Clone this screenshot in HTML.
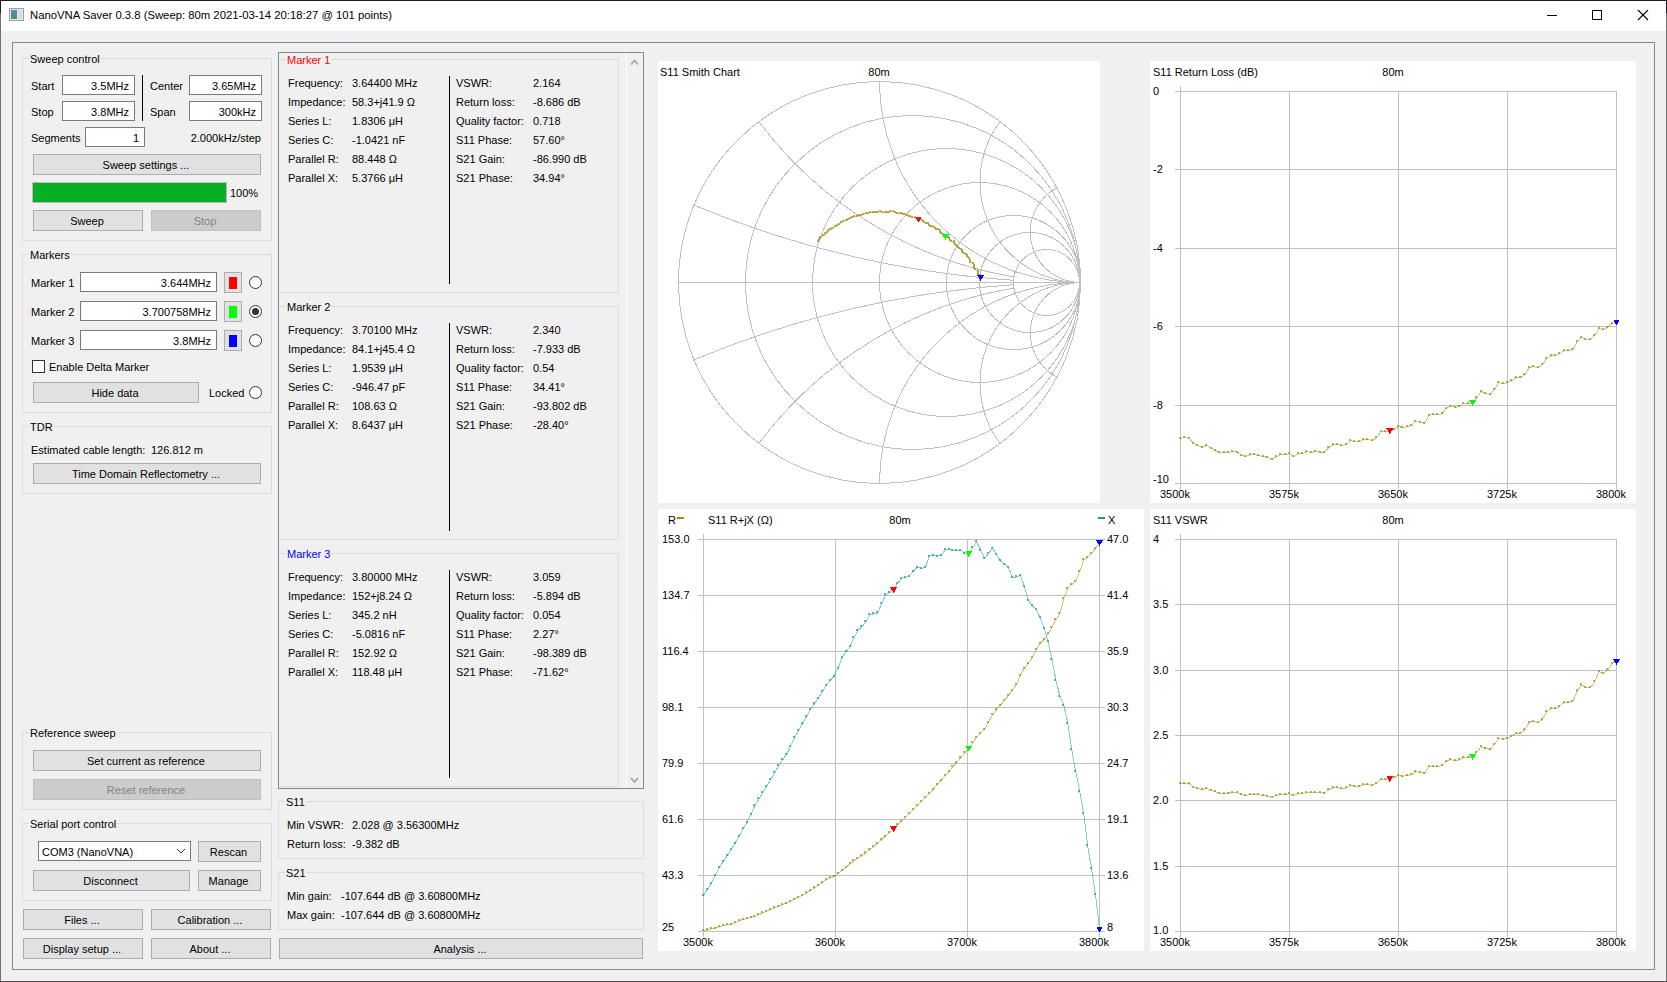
<!DOCTYPE html><html><head><meta charset="utf-8"><style>
*{margin:0;padding:0;box-sizing:border-box}
html,body{width:1667px;height:982px;overflow:hidden;background:#f0f0f0;font-family:"Liberation Sans",sans-serif;}
.t,.gl{position:absolute;font-size:11px;line-height:11px;white-space:nowrap;color:#000}
.gl{background:#f0f0f0;padding:0 1px}
.btn{position:absolute;background:#e1e1e1;border:1px solid #adadad}
.btn.dis{background:#cccccc;border-color:#bfbfbf}
.inp{position:absolute;background:#fff;border:1px solid #7a7a7a}
.grp{position:absolute;border:1px solid #dcdcdc}
.frm{position:absolute;border:1px solid #828790}
.rad{position:absolute;width:13px;height:13px;border-radius:50%;border:1px solid #333;background:#fff}
.dot{position:absolute;width:7px;height:7px;border-radius:50%;background:#333}
.blk{position:absolute}
svg{position:absolute;left:0;top:0}
</style></head><body>
<div class="blk" style="left:0px;top:0px;width:1667px;height:982px;background:#f0f0f0;"></div>
<div class="blk" style="left:0px;top:0px;width:1667px;height:31px;background:#fff;"></div>
<div class="blk" style="left:0px;top:0px;width:1667px;height:1px;background:#1c1c28;"></div>
<div class="blk" style="left:0px;top:0px;width:1px;height:982px;background:#707070;"></div>
<div class="blk" style="left:0px;top:0px;width:1px;height:13px;background:#1c1c28;"></div>
<div class="blk" style="left:1666px;top:0px;width:1px;height:982px;background:#707070;"></div>
<div class="blk" style="left:1666px;top:0px;width:1px;height:13px;background:#1c1c28;"></div>
<div class="blk" style="left:0px;top:981px;width:1667px;height:1px;background:#6b4a3a;"></div>
<div class="blk" style="left:9px;top:8px;width:15px;height:13px;background:#e8e8e8;border:1px solid #9aa0a6;"></div>
<div class="blk" style="left:11px;top:10px;width:6px;height:9px;background:linear-gradient(#5b8ab8,#3f9a5a);"></div>
<div class="blk" style="left:18px;top:10px;width:4px;height:9px;background:#d8dde0;"></div>
<div class="t" style="left:30px;top:11px;font-size:11.3px;line-height:11.3px;top:10px;">NanoVNA Saver 0.3.8 (Sweep: 80m 2021-03-14 20:18:27 @ 101 points)</div>
<div class="blk" style="left:1547px;top:15px;width:10px;height:1px;background:#000;"></div>
<div class="blk" style="left:1592px;top:10px;width:10px;height:10px;border:1px solid #000;"></div>
<svg width="1667" height="982" style="pointer-events:none"><path d="M1638 10 L1648 20 M1648 10 L1638 20" stroke="#000" stroke-width="1.1" fill="none"/></svg>
<div class="frm" style="left:12px;top:42px;width:1643px;height:928px;"></div>
<div class="grp" style="left:22px;top:58px;width:250px;height:183px;"></div>
<div class="gl" style="left:29px;top:54px;">Sweep control</div>
<div class="t" style="left:31px;top:81px;">Start</div>
<div class="inp" style="left:62px;top:75px;width:73px;height:20px;"></div>
<div class="t" style="right:1538px;top:81px;">3.5MHz</div>
<div class="t" style="left:31px;top:107px;">Stop</div>
<div class="inp" style="left:62px;top:101px;width:73px;height:20px;"></div>
<div class="t" style="right:1538px;top:107px;">3.8MHz</div>
<div class="blk" style="left:142px;top:75px;width:1px;height:46px;background:#000;"></div>
<div class="t" style="left:150px;top:81px;">Center</div>
<div class="inp" style="left:189px;top:75px;width:73px;height:20px;"></div>
<div class="t" style="right:1411px;top:81px;">3.65MHz</div>
<div class="t" style="left:150px;top:107px;">Span</div>
<div class="inp" style="left:189px;top:101px;width:73px;height:20px;"></div>
<div class="t" style="right:1411px;top:107px;">300kHz</div>
<div class="t" style="left:31px;top:133px;">Segments</div>
<div class="inp" style="left:85px;top:127px;width:60px;height:20px;"></div>
<div class="t" style="right:1528px;top:133px;">1</div>
<div class="t" style="right:1406px;top:133px;">2.000kHz/step</div>
<div class="btn" style="left:33px;top:154px;width:228px;height:21px;"></div>
<div class="t" style="left:32px;width:228px;top:160px;text-align:center;">Sweep settings ...</div>
<div class="blk" style="left:32px;top:182px;width:195px;height:21px;background:#06b025;border:1px solid #bcbcbc;"></div>
<div class="t" style="left:230px;top:188px;">100%</div>
<div class="btn" style="left:33px;top:210px;width:110px;height:21px;"></div>
<div class="t" style="left:32px;width:110px;top:216px;text-align:center;">Sweep</div>
<div class="btn dis" style="left:151px;top:210px;width:110px;height:21px;"></div>
<div class="t" style="left:150px;width:110px;top:216px;text-align:center;color:#838383;">Stop</div>
<div class="grp" style="left:22px;top:254px;width:250px;height:159px;"></div>
<div class="gl" style="left:29px;top:250px;">Markers</div>
<div class="t" style="left:31px;top:278px;">Marker 1</div>
<div class="inp" style="left:80px;top:272px;width:137px;height:20px;"></div>
<div class="t" style="right:1456px;top:278px;">3.644MHz</div>
<div class="btn" style="left:224px;top:272px;width:18px;height:21px;"></div>
<div class="blk" style="left:229px;top:277px;width:8px;height:12px;background:#ff0000;"></div>
<div class="rad" style="left:249px;top:276px;"></div>
<div class="t" style="left:31px;top:307px;">Marker 2</div>
<div class="inp" style="left:80px;top:301px;width:137px;height:20px;"></div>
<div class="t" style="right:1456px;top:307px;">3.700758MHz</div>
<div class="btn" style="left:224px;top:301px;width:18px;height:21px;"></div>
<div class="blk" style="left:229px;top:306px;width:8px;height:12px;background:#00ff00;"></div>
<div class="rad" style="left:249px;top:305px;"></div>
<div class="dot" style="left:252px;top:308px;"></div>
<div class="t" style="left:31px;top:336px;">Marker 3</div>
<div class="inp" style="left:80px;top:330px;width:137px;height:20px;"></div>
<div class="t" style="right:1456px;top:336px;">3.8MHz</div>
<div class="btn" style="left:224px;top:330px;width:18px;height:21px;"></div>
<div class="blk" style="left:229px;top:335px;width:8px;height:12px;background:#0000ff;"></div>
<div class="rad" style="left:249px;top:334px;"></div>
<div class="blk" style="left:32px;top:360px;width:13px;height:13px;background:#fff;border:1px solid #333;"></div>
<div class="t" style="left:49px;top:362px;">Enable Delta Marker</div>
<div class="btn" style="left:33px;top:382px;width:166px;height:21px;"></div>
<div class="t" style="left:32px;width:166px;top:388px;text-align:center;">Hide data</div>
<div class="t" style="left:209px;top:388px;">Locked</div>
<div class="rad" style="left:249px;top:386px;"></div>
<div class="grp" style="left:22px;top:426px;width:250px;height:68px;"></div>
<div class="gl" style="left:29px;top:422px;">TDR</div>
<div class="t" style="left:31px;top:445px;">Estimated cable length:</div>
<div class="t" style="left:151px;top:445px;">126.812 m</div>
<div class="btn" style="left:33px;top:463px;width:228px;height:21px;"></div>
<div class="t" style="left:32px;width:228px;top:469px;text-align:center;">Time Domain Reflectometry ...</div>
<div class="grp" style="left:22px;top:732px;width:250px;height:78px;"></div>
<div class="gl" style="left:29px;top:728px;">Reference sweep</div>
<div class="btn" style="left:33px;top:750px;width:228px;height:21px;"></div>
<div class="t" style="left:32px;width:228px;top:756px;text-align:center;">Set current as reference</div>
<div class="btn dis" style="left:33px;top:779px;width:228px;height:21px;"></div>
<div class="t" style="left:32px;width:228px;top:785px;text-align:center;color:#838383;">Reset reference</div>
<div class="grp" style="left:22px;top:823px;width:250px;height:78px;"></div>
<div class="gl" style="left:29px;top:819px;">Serial port control</div>
<div class="inp" style="left:38px;top:841px;width:153px;height:20px;"></div>
<div class="t" style="left:42px;top:847px;">COM3 (NanoVNA)</div>
<svg width="1667" height="982"><path d="M177 849 L181 853 L185 849" stroke="#333" stroke-width="1" fill="none"/></svg>
<div class="btn" style="left:198px;top:841px;width:63px;height:21px;"></div>
<div class="t" style="left:197px;width:63px;top:847px;text-align:center;">Rescan</div>
<div class="btn" style="left:33px;top:870px;width:157px;height:21px;"></div>
<div class="t" style="left:32px;width:157px;top:876px;text-align:center;">Disconnect</div>
<div class="btn" style="left:198px;top:870px;width:63px;height:21px;"></div>
<div class="t" style="left:197px;width:63px;top:876px;text-align:center;">Manage</div>
<div class="btn" style="left:23px;top:909px;width:120px;height:21px;"></div>
<div class="t" style="left:22px;width:120px;top:915px;text-align:center;">Files ...</div>
<div class="btn" style="left:151px;top:909px;width:120px;height:21px;"></div>
<div class="t" style="left:150px;width:120px;top:915px;text-align:center;">Calibration ...</div>
<div class="btn" style="left:23px;top:938px;width:120px;height:21px;"></div>
<div class="t" style="left:22px;width:120px;top:944px;text-align:center;">Display setup ...</div>
<div class="btn" style="left:151px;top:938px;width:120px;height:21px;"></div>
<div class="t" style="left:150px;width:120px;top:944px;text-align:center;">About ...</div>
<div class="frm" style="left:278px;top:52px;width:366px;height:737px;"></div>
<div class="blk" style="left:626px;top:53px;width:1px;height:735px;background:#fff;"></div>
<svg width="1667" height="982"><path d="M631 64.5 L634.5 60.5 L638 64.5" stroke="#a3a3a3" stroke-width="1.6" fill="none"/><path d="M631 778 L634.5 782 L638 778" stroke="#a3a3a3" stroke-width="1.8" fill="none"/></svg>
<div class="grp" style="left:279px;top:59px;width:340px;height:234px;"></div>
<div class="gl" style="left:286px;top:55px;color:#ff0000;">Marker 1</div>
<div class="blk" style="left:279px;top:59px;width:1px;height:234px;background:#f0f0f0;"></div>
<div class="t" style="left:288px;top:78px;">Frequency:</div>
<div class="t" style="left:352px;top:78px;">3.64400 MHz</div>
<div class="t" style="left:456px;top:78px;">VSWR:</div>
<div class="t" style="left:533px;top:78px;">2.164</div>
<div class="t" style="left:288px;top:97px;">Impedance:</div>
<div class="t" style="left:352px;top:97px;">58.3+j41.9 Ω</div>
<div class="t" style="left:456px;top:97px;">Return loss:</div>
<div class="t" style="left:533px;top:97px;">-8.686 dB</div>
<div class="t" style="left:288px;top:116px;">Series L:</div>
<div class="t" style="left:352px;top:116px;">1.8306 μH</div>
<div class="t" style="left:456px;top:116px;">Quality factor:</div>
<div class="t" style="left:533px;top:116px;">0.718</div>
<div class="t" style="left:288px;top:135px;">Series C:</div>
<div class="t" style="left:352px;top:135px;">-1.0421 nF</div>
<div class="t" style="left:456px;top:135px;">S11 Phase:</div>
<div class="t" style="left:533px;top:135px;">57.60°</div>
<div class="t" style="left:288px;top:154px;">Parallel R:</div>
<div class="t" style="left:352px;top:154px;">88.448 Ω</div>
<div class="t" style="left:456px;top:154px;">S21 Gain:</div>
<div class="t" style="left:533px;top:154px;">-86.990 dB</div>
<div class="t" style="left:288px;top:173px;">Parallel X:</div>
<div class="t" style="left:352px;top:173px;">5.3766 μH</div>
<div class="t" style="left:456px;top:173px;">S21 Phase:</div>
<div class="t" style="left:533px;top:173px;">34.94°</div>
<div class="blk" style="left:449px;top:76px;width:1px;height:208px;background:#000;"></div>
<div class="grp" style="left:279px;top:306px;width:340px;height:234px;"></div>
<div class="gl" style="left:286px;top:302px;">Marker 2</div>
<div class="blk" style="left:279px;top:306px;width:1px;height:234px;background:#f0f0f0;"></div>
<div class="t" style="left:288px;top:325px;">Frequency:</div>
<div class="t" style="left:352px;top:325px;">3.70100 MHz</div>
<div class="t" style="left:456px;top:325px;">VSWR:</div>
<div class="t" style="left:533px;top:325px;">2.340</div>
<div class="t" style="left:288px;top:344px;">Impedance:</div>
<div class="t" style="left:352px;top:344px;">84.1+j45.4 Ω</div>
<div class="t" style="left:456px;top:344px;">Return loss:</div>
<div class="t" style="left:533px;top:344px;">-7.933 dB</div>
<div class="t" style="left:288px;top:363px;">Series L:</div>
<div class="t" style="left:352px;top:363px;">1.9539 μH</div>
<div class="t" style="left:456px;top:363px;">Quality factor:</div>
<div class="t" style="left:533px;top:363px;">0.54</div>
<div class="t" style="left:288px;top:382px;">Series C:</div>
<div class="t" style="left:352px;top:382px;">-946.47 pF</div>
<div class="t" style="left:456px;top:382px;">S11 Phase:</div>
<div class="t" style="left:533px;top:382px;">34.41°</div>
<div class="t" style="left:288px;top:401px;">Parallel R:</div>
<div class="t" style="left:352px;top:401px;">108.63 Ω</div>
<div class="t" style="left:456px;top:401px;">S21 Gain:</div>
<div class="t" style="left:533px;top:401px;">-93.802 dB</div>
<div class="t" style="left:288px;top:420px;">Parallel X:</div>
<div class="t" style="left:352px;top:420px;">8.6437 μH</div>
<div class="t" style="left:456px;top:420px;">S21 Phase:</div>
<div class="t" style="left:533px;top:420px;">-28.40°</div>
<div class="blk" style="left:449px;top:323px;width:1px;height:208px;background:#000;"></div>
<div class="grp" style="left:279px;top:553px;width:340px;height:234px;"></div>
<div class="gl" style="left:286px;top:549px;color:#0000ff;">Marker 3</div>
<div class="blk" style="left:279px;top:553px;width:1px;height:234px;background:#f0f0f0;"></div>
<div class="t" style="left:288px;top:572px;">Frequency:</div>
<div class="t" style="left:352px;top:572px;">3.80000 MHz</div>
<div class="t" style="left:456px;top:572px;">VSWR:</div>
<div class="t" style="left:533px;top:572px;">3.059</div>
<div class="t" style="left:288px;top:591px;">Impedance:</div>
<div class="t" style="left:352px;top:591px;">152+j8.24 Ω</div>
<div class="t" style="left:456px;top:591px;">Return loss:</div>
<div class="t" style="left:533px;top:591px;">-5.894 dB</div>
<div class="t" style="left:288px;top:610px;">Series L:</div>
<div class="t" style="left:352px;top:610px;">345.2 nH</div>
<div class="t" style="left:456px;top:610px;">Quality factor:</div>
<div class="t" style="left:533px;top:610px;">0.054</div>
<div class="t" style="left:288px;top:629px;">Series C:</div>
<div class="t" style="left:352px;top:629px;">-5.0816 nF</div>
<div class="t" style="left:456px;top:629px;">S11 Phase:</div>
<div class="t" style="left:533px;top:629px;">2.27°</div>
<div class="t" style="left:288px;top:648px;">Parallel R:</div>
<div class="t" style="left:352px;top:648px;">152.92 Ω</div>
<div class="t" style="left:456px;top:648px;">S21 Gain:</div>
<div class="t" style="left:533px;top:648px;">-98.389 dB</div>
<div class="t" style="left:288px;top:667px;">Parallel X:</div>
<div class="t" style="left:352px;top:667px;">118.48 μH</div>
<div class="t" style="left:456px;top:667px;">S21 Phase:</div>
<div class="t" style="left:533px;top:667px;">-71.62°</div>
<div class="blk" style="left:449px;top:570px;width:1px;height:208px;background:#000;"></div>
<div class="grp" style="left:278px;top:801px;width:366px;height:58px;"></div>
<div class="gl" style="left:285px;top:797px;">S11</div>
<div class="t" style="left:287px;top:820px;">Min VSWR:</div>
<div class="t" style="left:352px;top:820px;">2.028 @ 3.56300MHz</div>
<div class="t" style="left:287px;top:839px;">Return loss:</div>
<div class="t" style="left:352px;top:839px;">-9.382 dB</div>
<div class="grp" style="left:278px;top:872px;width:366px;height:58px;"></div>
<div class="gl" style="left:285px;top:868px;">S21</div>
<div class="t" style="left:287px;top:891px;">Min gain:</div>
<div class="t" style="left:341px;top:891px;">-107.644 dB @ 3.60800MHz</div>
<div class="t" style="left:287px;top:910px;">Max gain:</div>
<div class="t" style="left:341px;top:910px;">-107.644 dB @ 3.60800MHz</div>
<div class="btn" style="left:279px;top:938px;width:364px;height:21px;"></div>
<div class="t" style="left:278px;width:364px;top:944px;text-align:center;">Analysis ...</div>
<div class="blk" style="left:658px;top:61px;width:442px;height:442px;background:#fff;"></div>
<div class="blk" style="left:1150px;top:61px;width:486px;height:442px;background:#fff;"></div>
<div class="blk" style="left:658px;top:509px;width:486px;height:442px;background:#fff;"></div>
<div class="blk" style="left:1150px;top:509px;width:486px;height:442px;background:#fff;"></div>
<svg width="1667" height="982" shape-rendering="crispEdges"><g stroke="#c0c0c0" stroke-width="1" fill="none" shape-rendering="crispEdges"><circle cx="879.5" cy="282.5" r="201"/><line x1="678.5" y1="282.5" x2="1080.5" y2="282.5"/><circle cx="979.5" cy="282.5" r="100"/><circle cx="1013.5" cy="282.5" r="67"/><circle cx="1029.5" cy="282.5" r="50"/><circle cx="1046.5" cy="282.5" r="33"/><circle cx="946.5" cy="282.5" r="134"/><circle cx="912.5" cy="282.5" r="167"/><path d="M1080.50 282.50 A50.25 50.25 0 0 0 1056.91 377.12" fill="none"/><path d="M1080.50 282.50 A50.25 50.25 0 0 1 1056.91 187.88" fill="none"/><path d="M1080.50 282.50 A100.5 100.5 0 0 0 1000.24 443.48" fill="none"/><path d="M1080.50 282.50 A100.5 100.5 0 0 1 1000.24 121.52" fill="none"/><path d="M1080.50 282.50 A201 201 0 0 0 879.50 483.50" fill="none"/><path d="M1080.50 282.50 A201 201 0 0 1 879.50 81.50" fill="none"/><path d="M1014.15 288.01 A402 402 0 0 0 759.45 442.57" fill="none"/><path d="M1014.15 276.99 A402 402 0 0 1 759.45 122.43" fill="none"/><path d="M1013.02 284.77 A1005 1005 0 0 0 692.66 360.35" fill="none"/><path d="M1013.02 280.23 A1005 1005 0 0 1 692.66 204.65" fill="none"/></g><g shape-rendering="auto"><polyline points="818.2,241.1 819.3,239.1 820.9,237.4 823.5,235.8 825.7,233.9 827.6,232.5 828.8,230.7 830.7,229.6 832.9,228.3 835.3,227.0 837.5,225.3 839.3,224.0 841.4,222.4 843.7,221.1 846.2,220.5 848.5,219.6 850.5,218.2 852.7,217.3 855.0,216.6 857.2,216.0 859.3,215.7 861.3,215.5 863.6,214.3 866.1,213.5 868.4,213.1 870.7,212.5 873.3,212.9 875.7,212.2 878.0,212.1 880.4,211.7 882.8,212.0 885.2,212.0 886.7,212.3 888.2,212.6 890.8,211.9 893.7,211.9 896.0,212.4 898.0,213.2 900.2,213.6 902.4,213.5 903.8,214.3 905.5,214.9 907.6,215.3 909.2,216.0 910.6,217.0 912.8,217.4 915.3,217.3 916.9,218.2 918.5,219.0 920.3,219.9 922.2,220.3 923.4,221.6 925.0,222.5 926.5,223.4 928.4,223.8 929.5,225.0 930.5,226.4 932.9,226.1 934.3,227.2 935.5,228.4 936.7,229.5 938.7,229.9 940.0,230.8 940.9,232.2 942.0,233.3 943.5,234.1 944.3,235.4 945.4,236.5 947.2,237.1 949.2,237.5 949.5,238.9 950.0,240.3 951.9,241.1 954.2,241.8 954.6,243.2 955.4,244.3 956.4,245.2 957.7,246.0 958.3,247.5 959.4,248.2 961.8,249.2 962.7,250.7 962.9,252.4 964.0,253.2 966.1,254.1 967.2,255.2 967.5,256.2 968.4,257.5 969.7,259.0 970.1,260.9 970.7,262.3 973.2,263.8 974.8,265.4 974.4,267.1 974.6,268.3 976.0,269.8 978.2,271.3 978.0,273.0 978.8,274.3 980.1,275.6 980.6,277.4" fill="none" stroke="rgba(160,140,20,0.5)" stroke-width="1" shape-rendering="crispEdges"/><path d="M817 240h2v2h-2zM818 238h2v2h-2zM819 236h2v2h-2zM822 234h2v2h-2zM824 232h2v2h-2zM826 231h2v2h-2zM827 229h2v2h-2zM829 228h2v2h-2zM831 227h2v2h-2zM834 225h2v2h-2zM836 224h2v2h-2zM838 223h2v2h-2zM840 221h2v2h-2zM842 220h2v2h-2zM845 219h2v2h-2zM847 218h2v2h-2zM849 217h2v2h-2zM851 216h2v2h-2zM853 215h2v2h-2zM856 215h2v2h-2zM858 214h2v2h-2zM860 214h2v2h-2zM862 213h2v2h-2zM865 212h2v2h-2zM867 212h2v2h-2zM869 211h2v2h-2zM872 211h2v2h-2zM874 211h2v2h-2zM876 211h2v2h-2zM879 210h2v2h-2zM881 211h2v2h-2zM884 211h2v2h-2zM885 211h2v2h-2zM887 211h2v2h-2zM889 210h2v2h-2zM892 210h2v2h-2zM894 211h2v2h-2zM896 212h2v2h-2zM899 212h2v2h-2zM901 212h2v2h-2zM902 213h2v2h-2zM904 213h2v2h-2zM906 214h2v2h-2zM908 215h2v2h-2zM909 215h2v2h-2zM911 216h2v2h-2zM914 216h2v2h-2zM915 217h2v2h-2zM917 218h2v2h-2zM919 218h2v2h-2zM921 219h2v2h-2zM922 220h2v2h-2zM923 221h2v2h-2zM925 222h2v2h-2zM927 222h2v2h-2zM928 224h2v2h-2zM929 225h2v2h-2zM931 225h2v2h-2zM933 226h2v2h-2zM934 227h2v2h-2zM935 228h2v2h-2zM937 228h2v2h-2zM939 229h2v2h-2zM939 231h2v2h-2zM940 232h2v2h-2zM942 233h2v2h-2zM943 234h2v2h-2zM944 235h2v2h-2zM946 236h2v2h-2zM948 236h2v2h-2zM948 237h2v2h-2zM949 239h2v2h-2zM950 240h2v2h-2zM953 240h2v2h-2zM953 242h2v2h-2zM954 243h2v2h-2zM955 244h2v2h-2zM956 245h2v2h-2zM957 246h2v2h-2zM958 247h2v2h-2zM960 248h2v2h-2zM961 249h2v2h-2zM961 251h2v2h-2zM963 252h2v2h-2zM965 253h2v2h-2zM966 254h2v2h-2zM966 255h2v2h-2zM967 256h2v2h-2zM968 257h2v2h-2zM969 259h2v2h-2zM969 261h2v2h-2zM972 262h2v2h-2zM973 264h2v2h-2zM973 266h2v2h-2zM973 267h2v2h-2zM974 268h2v2h-2zM977 270h2v2h-2zM977 272h2v2h-2zM977 273h2v2h-2zM979 274h2v2h-2zM979 276h2v2h-2z" fill="rgba(160,140,20,0.7)" shape-rendering="crispEdges"/><path d="M915.0 216.5 L922.0 216.5 L918.5 222.5 Z" fill="#ff0000" shape-rendering="crispEdges"/><path d="M941.9 234.0 L948.9 234.0 L945.4 240.0 Z" fill="#00ff00" shape-rendering="crispEdges"/><path d="M977.1 274.9 L984.1 274.9 L980.6 280.9 Z" fill="#0000ff" shape-rendering="crispEdges"/></g><g stroke="#c0c0c0" stroke-width="1"><line x1="1175" y1="91.5" x2="1617" y2="91.5"/><line x1="1175" y1="169.9" x2="1617" y2="169.9"/><line x1="1175" y1="248.3" x2="1617" y2="248.3"/><line x1="1175" y1="326.7" x2="1617" y2="326.7"/><line x1="1175" y1="405.1" x2="1617" y2="405.1"/><line x1="1175" y1="483.5" x2="1617" y2="483.5"/><line x1="1180.5" y1="86" x2="1180.5" y2="489"/><line x1="1289.5" y1="91" x2="1289.5" y2="489"/><line x1="1398.5" y1="91" x2="1398.5" y2="489"/><line x1="1507.5" y1="91" x2="1507.5" y2="489"/><line x1="1616.5" y1="91" x2="1616.5" y2="489"/></g><g shape-rendering="auto"><polyline points="1180.5,438.3 1184.9,437.2 1189.2,438.3 1193.6,443.4 1197.9,445.4 1202.3,447.5 1206.7,445.4 1211.0,448.0 1215.4,450.4 1219.7,452.7 1224.1,452.7 1228.5,452.7 1232.8,451.5 1237.2,452.1 1241.5,455.4 1245.9,456.6 1250.3,454.8 1254.6,454.8 1259.0,455.6 1263.3,456.4 1267.7,457.6 1272.1,459.5 1276.4,456.5 1280.8,454.8 1285.1,454.8 1289.5,453.5 1293.9,456.5 1298.2,453.8 1302.6,453.8 1306.9,451.5 1311.3,452.5 1315.7,451.5 1320.0,452.1 1324.4,452.7 1328.7,447.5 1333.1,444.5 1337.5,444.5 1341.8,445.7 1346.2,444.5 1350.5,440.6 1354.9,441.8 1359.3,441.8 1363.6,439.6 1368.0,439.6 1372.3,440.6 1376.7,437.6 1381.1,431.8 1385.4,431.8 1389.8,430.9 1394.1,429.5 1398.5,426.4 1402.9,427.7 1407.2,426.6 1411.6,425.5 1415.9,421.4 1420.3,422.3 1424.7,423.6 1429.0,415.1 1433.4,414.4 1437.7,414.4 1442.1,413.8 1446.5,408.4 1450.8,406.3 1455.2,407.4 1459.5,406.6 1463.9,403.4 1468.3,403.6 1472.6,402.4 1477.0,397.6 1481.3,391.5 1485.7,393.5 1490.1,394.5 1494.4,389.5 1498.8,382.7 1503.1,383.7 1507.5,382.7 1511.9,380.7 1516.2,377.6 1520.6,377.6 1524.9,374.6 1529.3,367.5 1533.7,366.5 1538.0,367.9 1542.4,364.8 1546.7,358.4 1551.1,355.7 1555.5,355.7 1559.8,353.7 1564.2,350.6 1568.5,350.6 1572.9,349.6 1577.3,341.8 1581.6,337.5 1586.0,339.5 1590.3,339.5 1594.7,335.5 1599.1,328.5 1603.4,329.7 1607.8,327.4 1612.1,323.3 1616.5,322.0" fill="none" stroke="rgba(160,140,20,0.5)" stroke-width="1" shape-rendering="crispEdges"/><path d="M1179 437h2v2h-2zM1183 436h2v2h-2zM1188 437h2v2h-2zM1192 442h2v2h-2zM1196 444h2v2h-2zM1201 446h2v2h-2zM1205 444h2v2h-2zM1210 447h2v2h-2zM1214 449h2v2h-2zM1218 451h2v2h-2zM1223 451h2v2h-2zM1227 451h2v2h-2zM1231 450h2v2h-2zM1236 451h2v2h-2zM1240 454h2v2h-2zM1244 455h2v2h-2zM1249 453h2v2h-2zM1253 453h2v2h-2zM1257 454h2v2h-2zM1262 455h2v2h-2zM1266 456h2v2h-2zM1271 458h2v2h-2zM1275 455h2v2h-2zM1279 453h2v2h-2zM1284 453h2v2h-2zM1288 452h2v2h-2zM1292 455h2v2h-2zM1297 452h2v2h-2zM1301 452h2v2h-2zM1305 450h2v2h-2zM1310 451h2v2h-2zM1314 450h2v2h-2zM1319 451h2v2h-2zM1323 451h2v2h-2zM1327 446h2v2h-2zM1332 443h2v2h-2zM1336 443h2v2h-2zM1340 444h2v2h-2zM1345 443h2v2h-2zM1349 439h2v2h-2zM1353 440h2v2h-2zM1358 440h2v2h-2zM1362 438h2v2h-2zM1366 438h2v2h-2zM1371 439h2v2h-2zM1375 436h2v2h-2zM1380 430h2v2h-2zM1384 430h2v2h-2zM1388 429h2v2h-2zM1393 428h2v2h-2zM1397 425h2v2h-2zM1401 426h2v2h-2zM1406 425h2v2h-2zM1410 424h2v2h-2zM1414 420h2v2h-2zM1419 421h2v2h-2zM1423 422h2v2h-2zM1428 414h2v2h-2zM1432 413h2v2h-2zM1436 413h2v2h-2zM1441 412h2v2h-2zM1445 407h2v2h-2zM1449 405h2v2h-2zM1454 406h2v2h-2zM1458 405h2v2h-2zM1462 402h2v2h-2zM1467 402h2v2h-2zM1471 401h2v2h-2zM1475 396h2v2h-2zM1480 390h2v2h-2zM1484 392h2v2h-2zM1489 393h2v2h-2zM1493 388h2v2h-2zM1497 381h2v2h-2zM1502 382h2v2h-2zM1506 381h2v2h-2zM1510 379h2v2h-2zM1515 376h2v2h-2zM1519 376h2v2h-2zM1523 373h2v2h-2zM1528 366h2v2h-2zM1532 365h2v2h-2zM1537 366h2v2h-2zM1541 363h2v2h-2zM1545 357h2v2h-2zM1550 354h2v2h-2zM1554 354h2v2h-2zM1558 352h2v2h-2zM1563 349h2v2h-2zM1567 349h2v2h-2zM1571 348h2v2h-2zM1576 340h2v2h-2zM1580 336h2v2h-2zM1584 338h2v2h-2zM1589 338h2v2h-2zM1593 334h2v2h-2zM1598 327h2v2h-2zM1602 328h2v2h-2zM1606 326h2v2h-2zM1611 322h2v2h-2zM1615 320h2v2h-2z" fill="rgba(160,140,20,0.7)" shape-rendering="crispEdges"/><path d="M1386.3 428.4 L1393.3 428.4 L1389.8 434.4 Z" fill="#ff0000" shape-rendering="crispEdges"/><path d="M1469.1 399.9 L1476.1 399.9 L1472.6 405.9 Z" fill="#00ff00" shape-rendering="crispEdges"/><path d="M1613.0 319.5 L1620.0 319.5 L1616.5 325.5 Z" fill="#0000ff" shape-rendering="crispEdges"/></g><g stroke="#c0c0c0" stroke-width="1"><line x1="1175" y1="539.5" x2="1617" y2="539.5"/><line x1="1175" y1="604.8" x2="1617" y2="604.8"/><line x1="1175" y1="670.2" x2="1617" y2="670.2"/><line x1="1175" y1="735.5" x2="1617" y2="735.5"/><line x1="1175" y1="800.8" x2="1617" y2="800.8"/><line x1="1175" y1="866.2" x2="1617" y2="866.2"/><line x1="1175" y1="931.5" x2="1617" y2="931.5"/><line x1="1180.5" y1="534" x2="1180.5" y2="937"/><line x1="1289.5" y1="539" x2="1289.5" y2="937"/><line x1="1398.5" y1="539" x2="1398.5" y2="937"/><line x1="1507.5" y1="539" x2="1507.5" y2="937"/><line x1="1616.5" y1="539" x2="1616.5" y2="937"/></g><g shape-rendering="auto"><polyline points="1180.5,783.8 1184.9,783.0 1189.2,783.8 1193.6,787.2 1197.9,788.5 1202.3,789.8 1206.7,788.5 1211.0,790.2 1215.4,791.7 1219.7,793.2 1224.1,793.2 1228.5,793.2 1232.8,792.4 1237.2,792.7 1241.5,794.8 1245.9,795.6 1250.3,794.4 1254.6,794.4 1259.0,794.9 1263.3,795.4 1267.7,796.1 1272.1,797.3 1276.4,795.5 1280.8,794.4 1285.1,794.4 1289.5,793.7 1293.9,795.5 1298.2,793.8 1302.6,793.8 1306.9,792.4 1311.3,793.0 1315.7,792.4 1320.0,792.7 1324.4,793.2 1328.7,789.8 1333.1,787.9 1337.5,787.9 1341.8,788.7 1346.2,787.9 1350.5,785.3 1354.9,786.1 1359.3,786.1 1363.6,784.7 1368.0,784.7 1372.3,785.3 1376.7,783.3 1381.1,779.3 1385.4,779.3 1389.8,778.6 1394.1,777.7 1398.5,775.4 1402.9,776.3 1407.2,775.5 1411.6,774.7 1415.9,771.7 1420.3,772.3 1424.7,773.3 1429.0,766.8 1433.4,766.3 1437.7,766.3 1442.1,765.7 1446.5,761.4 1450.8,759.7 1455.2,760.6 1459.5,759.9 1463.9,757.2 1468.3,757.4 1472.6,756.4 1477.0,752.1 1481.3,746.6 1485.7,748.5 1490.1,749.3 1494.4,744.7 1498.8,738.2 1503.1,739.1 1507.5,738.2 1511.9,736.2 1516.2,733.0 1520.6,733.0 1524.9,730.0 1529.3,722.3 1533.7,721.2 1538.0,722.7 1542.4,719.2 1546.7,711.9 1551.1,708.7 1555.5,708.7 1559.8,706.2 1564.2,702.3 1568.5,702.3 1572.9,701.1 1577.3,690.8 1581.6,684.8 1586.0,687.7 1590.3,687.7 1594.7,682.0 1599.1,671.6 1603.4,673.4 1607.8,670.0 1612.1,663.6 1616.5,661.5" fill="none" stroke="rgba(160,140,20,0.5)" stroke-width="1" shape-rendering="crispEdges"/><path d="M1179 782h2v2h-2zM1183 782h2v2h-2zM1188 782h2v2h-2zM1192 786h2v2h-2zM1196 787h2v2h-2zM1201 788h2v2h-2zM1205 787h2v2h-2zM1210 789h2v2h-2zM1214 790h2v2h-2zM1218 792h2v2h-2zM1223 792h2v2h-2zM1227 792h2v2h-2zM1231 791h2v2h-2zM1236 791h2v2h-2zM1240 793h2v2h-2zM1244 794h2v2h-2zM1249 793h2v2h-2zM1253 793h2v2h-2zM1257 793h2v2h-2zM1262 794h2v2h-2zM1266 795h2v2h-2zM1271 796h2v2h-2zM1275 794h2v2h-2zM1279 793h2v2h-2zM1284 793h2v2h-2zM1288 792h2v2h-2zM1292 794h2v2h-2zM1297 792h2v2h-2zM1301 792h2v2h-2zM1305 791h2v2h-2zM1310 791h2v2h-2zM1314 791h2v2h-2zM1319 791h2v2h-2zM1323 792h2v2h-2zM1327 788h2v2h-2zM1332 786h2v2h-2zM1336 786h2v2h-2zM1340 787h2v2h-2zM1345 786h2v2h-2zM1349 784h2v2h-2zM1353 785h2v2h-2zM1358 785h2v2h-2zM1362 783h2v2h-2zM1366 783h2v2h-2zM1371 784h2v2h-2zM1375 782h2v2h-2zM1380 778h2v2h-2zM1384 778h2v2h-2zM1388 777h2v2h-2zM1393 776h2v2h-2zM1397 774h2v2h-2zM1401 775h2v2h-2zM1406 774h2v2h-2zM1410 773h2v2h-2zM1414 770h2v2h-2zM1419 771h2v2h-2zM1423 772h2v2h-2zM1428 765h2v2h-2zM1432 765h2v2h-2zM1436 765h2v2h-2zM1441 764h2v2h-2zM1445 760h2v2h-2zM1449 758h2v2h-2zM1454 759h2v2h-2zM1458 758h2v2h-2zM1462 756h2v2h-2zM1467 756h2v2h-2zM1471 755h2v2h-2zM1475 751h2v2h-2zM1480 745h2v2h-2zM1484 747h2v2h-2zM1489 748h2v2h-2zM1493 743h2v2h-2zM1497 737h2v2h-2zM1502 738h2v2h-2zM1506 737h2v2h-2zM1510 735h2v2h-2zM1515 732h2v2h-2zM1519 732h2v2h-2zM1523 728h2v2h-2zM1528 721h2v2h-2zM1532 720h2v2h-2zM1537 721h2v2h-2zM1541 718h2v2h-2zM1545 710h2v2h-2zM1550 707h2v2h-2zM1554 707h2v2h-2zM1558 705h2v2h-2zM1563 701h2v2h-2zM1567 701h2v2h-2zM1571 700h2v2h-2zM1576 689h2v2h-2zM1580 683h2v2h-2zM1584 686h2v2h-2zM1589 686h2v2h-2zM1593 680h2v2h-2zM1598 670h2v2h-2zM1602 672h2v2h-2zM1606 668h2v2h-2zM1611 662h2v2h-2zM1615 660h2v2h-2z" fill="rgba(160,140,20,0.7)" shape-rendering="crispEdges"/><path d="M1386.3 776.1 L1393.3 776.1 L1389.8 782.1 Z" fill="#ff0000" shape-rendering="crispEdges"/><path d="M1469.1 753.9 L1476.1 753.9 L1472.6 759.9 Z" fill="#00ff00" shape-rendering="crispEdges"/><path d="M1613.0 659.0 L1620.0 659.0 L1616.5 665.0 Z" fill="#0000ff" shape-rendering="crispEdges"/></g><g stroke="#c0c0c0" stroke-width="1"><line x1="698" y1="539.5" x2="1105" y2="539.5"/><line x1="698" y1="595.5" x2="1105" y2="595.5"/><line x1="698" y1="651.5" x2="1105" y2="651.5"/><line x1="698" y1="707.5" x2="1105" y2="707.5"/><line x1="698" y1="763.5" x2="1105" y2="763.5"/><line x1="698" y1="819.5" x2="1105" y2="819.5"/><line x1="698" y1="875.5" x2="1105" y2="875.5"/><line x1="698" y1="931.5" x2="1105" y2="931.5"/><line x1="703.5" y1="534" x2="703.5" y2="937"/><line x1="835.5" y1="539" x2="835.5" y2="937"/><line x1="967.5" y1="539" x2="967.5" y2="937"/><line x1="1099.5" y1="539" x2="1099.5" y2="937"/></g><g shape-rendering="auto"><polyline points="703.5,930.9 707.5,930.0 711.4,929.0 715.4,928.0 719.3,926.9 723.3,925.7 727.3,924.9 731.2,924.2 735.2,922.6 739.1,921.0 743.1,919.4 747.1,918.4 751.0,917.4 755.0,916.4 758.9,914.7 762.9,912.9 766.9,911.1 770.8,909.6 774.8,908.0 778.7,906.4 782.7,904.7 786.7,903.0 790.6,901.3 794.6,899.4 798.5,897.4 802.5,895.4 806.5,893.0 810.4,890.5 814.4,888.0 818.3,885.2 822.3,882.4 826.3,879.7 830.2,878.0 834.2,876.3 838.1,873.4 842.1,870.2 846.1,867.0 850.0,863.9 854.0,861.0 857.9,858.3 861.9,855.7 865.9,853.0 869.8,849.7 873.8,846.4 877.7,843.1 881.7,839.7 885.7,836.0 889.6,832.4 893.6,828.7 897.5,825.0 901.5,821.3 905.5,817.5 909.4,813.6 913.4,809.6 917.3,805.7 921.3,801.7 925.3,797.7 929.2,793.8 933.2,789.3 937.1,784.9 941.1,780.4 945.1,776.0 949.0,771.4 953.0,766.9 956.9,762.3 960.9,757.6 964.9,753.0 968.8,748.1 972.8,742.6 976.7,737.2 980.7,733.2 984.7,729.2 988.6,722.1 992.6,714.9 996.5,709.9 1000.5,705.3 1004.5,700.5 1008.4,695.6 1012.4,690.2 1016.3,684.7 1020.3,675.2 1024.3,668.4 1028.2,663.1 1032.2,657.9 1036.1,649.9 1040.1,643.3 1044.1,639.3 1048.0,634.0 1052.0,627.3 1055.9,619.6 1059.9,613.5 1063.9,598.7 1067.8,588.1 1071.8,584.5 1075.7,581.5 1079.7,571.6 1083.7,559.8 1087.6,557.4 1091.6,553.6 1095.5,548.8 1099.5,542.5" fill="none" stroke="rgba(160,140,20,0.5)" stroke-width="1" shape-rendering="crispEdges"/><path d="M702 929h2v2h-2zM706 928h2v2h-2zM710 927h2v2h-2zM714 927h2v2h-2zM718 925h2v2h-2zM722 924h2v2h-2zM726 923h2v2h-2zM730 923h2v2h-2zM734 921h2v2h-2zM738 919h2v2h-2zM742 918h2v2h-2zM746 917h2v2h-2zM750 916h2v2h-2zM753 915h2v2h-2zM757 913h2v2h-2zM761 911h2v2h-2zM765 910h2v2h-2zM769 908h2v2h-2zM773 906h2v2h-2zM777 905h2v2h-2zM781 903h2v2h-2zM785 902h2v2h-2zM789 900h2v2h-2zM793 898h2v2h-2zM797 896h2v2h-2zM801 894h2v2h-2zM805 891h2v2h-2zM809 889h2v2h-2zM813 886h2v2h-2zM817 884h2v2h-2zM821 881h2v2h-2zM825 878h2v2h-2zM829 876h2v2h-2zM833 875h2v2h-2zM837 872h2v2h-2zM841 869h2v2h-2zM845 866h2v2h-2zM849 862h2v2h-2zM852 859h2v2h-2zM856 857h2v2h-2zM860 854h2v2h-2zM864 851h2v2h-2zM868 848h2v2h-2zM872 845h2v2h-2zM876 842h2v2h-2zM880 838h2v2h-2zM884 835h2v2h-2zM888 831h2v2h-2zM892 827h2v2h-2zM896 823h2v2h-2zM900 820h2v2h-2zM904 816h2v2h-2zM908 812h2v2h-2zM912 808h2v2h-2zM916 804h2v2h-2zM920 800h2v2h-2zM924 796h2v2h-2zM928 792h2v2h-2zM932 788h2v2h-2zM936 783h2v2h-2zM940 779h2v2h-2zM944 774h2v2h-2zM948 770h2v2h-2zM951 765h2v2h-2zM955 761h2v2h-2zM959 756h2v2h-2zM963 751h2v2h-2zM967 747h2v2h-2zM971 741h2v2h-2zM975 736h2v2h-2zM979 732h2v2h-2zM983 728h2v2h-2zM987 721h2v2h-2zM991 713h2v2h-2zM995 708h2v2h-2zM999 704h2v2h-2zM1003 699h2v2h-2zM1007 694h2v2h-2zM1011 689h2v2h-2zM1015 683h2v2h-2zM1019 674h2v2h-2zM1023 667h2v2h-2zM1027 662h2v2h-2zM1031 656h2v2h-2zM1035 648h2v2h-2zM1039 642h2v2h-2zM1043 638h2v2h-2zM1047 632h2v2h-2zM1050 626h2v2h-2zM1054 618h2v2h-2zM1058 612h2v2h-2zM1062 597h2v2h-2zM1066 587h2v2h-2zM1070 583h2v2h-2zM1074 580h2v2h-2zM1078 570h2v2h-2zM1082 558h2v2h-2zM1086 556h2v2h-2zM1090 552h2v2h-2zM1094 547h2v2h-2zM1098 541h2v2h-2z" fill="rgba(160,140,20,0.7)" shape-rendering="crispEdges"/><polyline points="703.5,895.2 707.5,889.4 711.4,883.5 715.4,875.6 719.3,867.6 723.3,861.6 727.3,855.6 731.2,849.4 735.2,843.1 739.1,836.1 743.1,828.9 747.1,822.3 751.0,814.1 755.0,805.5 758.9,799.0 762.9,792.5 766.9,786.0 770.8,779.6 774.8,772.5 778.7,765.5 782.7,759.9 786.7,754.3 790.6,746.1 794.6,737.9 798.5,730.8 802.5,723.7 806.5,716.7 810.4,709.6 814.4,703.9 818.3,698.2 822.3,691.8 826.3,685.2 830.2,680.3 834.2,676.2 838.1,668.0 842.1,657.0 846.1,651.5 850.0,646.9 854.0,637.9 857.9,630.3 861.9,626.9 865.9,621.7 869.8,614.7 873.8,613.8 877.7,613.0 881.7,603.6 885.7,594.9 889.6,592.6 893.6,589.7 897.5,583.5 901.5,578.3 905.5,577.6 909.4,576.0 913.4,571.2 917.3,567.3 921.3,568.2 925.3,567.6 929.2,556.2 933.2,555.4 937.1,556.1 941.1,555.4 945.1,549.9 949.0,549.0 953.0,551.0 956.9,550.8 960.9,550.5 964.9,553.1 968.8,553.5 972.8,547.6 976.7,541.7 980.7,550.0 984.7,558.6 988.6,553.4 992.6,548.1 996.5,554.5 1000.5,560.9 1004.5,564.3 1008.4,567.2 1012.4,577.7 1016.3,576.9 1020.3,575.4 1024.3,586.0 1028.2,600.2 1032.2,605.6 1036.1,609.3 1040.1,617.7 1044.1,628.1 1048.0,641.7 1052.0,659.5 1055.9,680.2 1059.9,696.0 1063.9,705.5 1067.8,723.1 1071.8,749.9 1075.7,771.4 1079.7,791.2 1083.7,813.8 1087.6,845.2 1091.6,868.8 1095.5,894.9 1099.5,929.0" fill="none" stroke="rgba(20,160,140,0.5)" stroke-width="1" shape-rendering="crispEdges"/><path d="M702 894h2v2h-2zM706 888h2v2h-2zM710 882h2v2h-2zM714 874h2v2h-2zM718 866h2v2h-2zM722 860h2v2h-2zM726 854h2v2h-2zM730 848h2v2h-2zM734 842h2v2h-2zM738 835h2v2h-2zM742 827h2v2h-2zM746 821h2v2h-2zM750 813h2v2h-2zM753 804h2v2h-2zM757 797h2v2h-2zM761 791h2v2h-2zM765 785h2v2h-2zM769 778h2v2h-2zM773 771h2v2h-2zM777 764h2v2h-2zM781 758h2v2h-2zM785 753h2v2h-2zM789 745h2v2h-2zM793 736h2v2h-2zM797 729h2v2h-2zM801 722h2v2h-2zM805 715h2v2h-2zM809 708h2v2h-2zM813 702h2v2h-2zM817 697h2v2h-2zM821 690h2v2h-2zM825 684h2v2h-2zM829 679h2v2h-2zM833 675h2v2h-2zM837 667h2v2h-2zM841 656h2v2h-2zM845 650h2v2h-2zM849 645h2v2h-2zM852 636h2v2h-2zM856 629h2v2h-2zM860 625h2v2h-2zM864 620h2v2h-2zM868 613h2v2h-2zM872 612h2v2h-2zM876 611h2v2h-2zM880 602h2v2h-2zM884 593h2v2h-2zM888 591h2v2h-2zM892 588h2v2h-2zM896 582h2v2h-2zM900 577h2v2h-2zM904 576h2v2h-2zM908 575h2v2h-2zM912 570h2v2h-2zM916 566h2v2h-2zM920 567h2v2h-2zM924 566h2v2h-2zM928 555h2v2h-2zM932 554h2v2h-2zM936 555h2v2h-2zM940 554h2v2h-2zM944 548h2v2h-2zM948 548h2v2h-2zM951 549h2v2h-2zM955 549h2v2h-2zM959 549h2v2h-2zM963 552h2v2h-2zM967 552h2v2h-2zM971 546h2v2h-2zM975 540h2v2h-2zM979 549h2v2h-2zM983 557h2v2h-2zM987 552h2v2h-2zM991 547h2v2h-2zM995 553h2v2h-2zM999 559h2v2h-2zM1003 563h2v2h-2zM1007 566h2v2h-2zM1011 576h2v2h-2zM1015 575h2v2h-2zM1019 574h2v2h-2zM1023 585h2v2h-2zM1027 599h2v2h-2zM1031 604h2v2h-2zM1035 608h2v2h-2zM1039 616h2v2h-2zM1043 627h2v2h-2zM1047 640h2v2h-2zM1050 658h2v2h-2zM1054 679h2v2h-2zM1058 695h2v2h-2zM1062 704h2v2h-2zM1066 722h2v2h-2zM1070 748h2v2h-2zM1074 770h2v2h-2zM1078 790h2v2h-2zM1082 812h2v2h-2zM1086 844h2v2h-2zM1090 867h2v2h-2zM1094 893h2v2h-2zM1098 928h2v2h-2z" fill="rgba(20,160,140,0.7)" shape-rendering="crispEdges"/><path d="M890.1 826.2 L897.1 826.2 L893.6 832.2 Z" fill="#ff0000" shape-rendering="crispEdges"/><path d="M965.3 745.6 L972.3 745.6 L968.8 751.6 Z" fill="#00ff00" shape-rendering="crispEdges"/><path d="M1096.0 540.0 L1103.0 540.0 L1099.5 546.0 Z" fill="#0000ff" shape-rendering="crispEdges"/><path d="M890.1 587.2 L897.1 587.2 L893.6 593.2 Z" fill="#ff0000" shape-rendering="crispEdges"/><path d="M965.3 551.0 L972.3 551.0 L968.8 557.0 Z" fill="#00ff00" shape-rendering="crispEdges"/><path d="M1096.0 926.5 L1103.0 926.5 L1099.5 932.5 Z" fill="#0000ff" shape-rendering="crispEdges"/></g><rect x="677" y="517" width="7" height="2" fill="rgb(160,140,20)"/><rect x="1098" y="517" width="7" height="2" fill="rgb(20,160,140)"/></svg>
<div class="t" style="left:660px;top:67px;">S11 Smith Chart</div>
<div class="t" style="left:839px;width:80px;top:67px;text-align:center;">80m</div>
<div class="t" style="left:1153px;top:67px;">S11 Return Loss (dB)</div>
<div class="t" style="left:1353px;width:80px;top:67px;text-align:center;">80m</div>
<div class="t" style="left:1153px;top:86px;">0</div>
<div class="t" style="left:1153px;top:164px;">-2</div>
<div class="t" style="left:1153px;top:243px;">-4</div>
<div class="t" style="left:1153px;top:321px;">-6</div>
<div class="t" style="left:1153px;top:400px;">-8</div>
<div class="t" style="left:1153px;top:474px;">-10</div>
<div class="t" style="left:1160px;top:489px;">3500k</div>
<div class="t" style="left:1269px;top:489px;">3575k</div>
<div class="t" style="left:1378px;top:489px;">3650k</div>
<div class="t" style="left:1487px;top:489px;">3725k</div>
<div class="t" style="left:1596px;top:489px;">3800k</div>
<div class="t" style="left:1153px;top:515px;">S11 VSWR</div>
<div class="t" style="left:1353px;width:80px;top:515px;text-align:center;">80m</div>
<div class="t" style="left:1153px;top:534px;">4</div>
<div class="t" style="left:1153px;top:599px;">3.5</div>
<div class="t" style="left:1153px;top:665px;">3.0</div>
<div class="t" style="left:1153px;top:730px;">2.5</div>
<div class="t" style="left:1153px;top:795px;">2.0</div>
<div class="t" style="left:1153px;top:861px;">1.5</div>
<div class="t" style="left:1153px;top:925px;">1.0</div>
<div class="t" style="left:1160px;top:937px;">3500k</div>
<div class="t" style="left:1269px;top:937px;">3575k</div>
<div class="t" style="left:1378px;top:937px;">3650k</div>
<div class="t" style="left:1487px;top:937px;">3725k</div>
<div class="t" style="left:1596px;top:937px;">3800k</div>
<div class="t" style="left:668px;top:515px;">R</div>
<div class="t" style="left:708px;top:515px;">S11 R+jX (Ω)</div>
<div class="t" style="left:860px;width:80px;top:515px;text-align:center;">80m</div>
<div class="t" style="left:1108px;top:515px;">X</div>
<div class="t" style="left:662px;top:534px;">153.0</div>
<div class="t" style="left:1107px;top:534px;">47.0</div>
<div class="t" style="left:662px;top:590px;">134.7</div>
<div class="t" style="left:1107px;top:590px;">41.4</div>
<div class="t" style="left:662px;top:646px;">116.4</div>
<div class="t" style="left:1107px;top:646px;">35.9</div>
<div class="t" style="left:662px;top:702px;">98.1</div>
<div class="t" style="left:1107px;top:702px;">30.3</div>
<div class="t" style="left:662px;top:758px;">79.9</div>
<div class="t" style="left:1107px;top:758px;">24.7</div>
<div class="t" style="left:662px;top:814px;">61.6</div>
<div class="t" style="left:1107px;top:814px;">19.1</div>
<div class="t" style="left:662px;top:870px;">43.3</div>
<div class="t" style="left:1107px;top:870px;">13.6</div>
<div class="t" style="left:662px;top:922px;">25</div>
<div class="t" style="left:1107px;top:922px;">8</div>
<div class="t" style="left:683px;top:937px;">3500k</div>
<div class="t" style="left:815px;top:937px;">3600k</div>
<div class="t" style="left:947px;top:937px;">3700k</div>
<div class="t" style="left:1079px;top:937px;">3800k</div>
</body></html>
